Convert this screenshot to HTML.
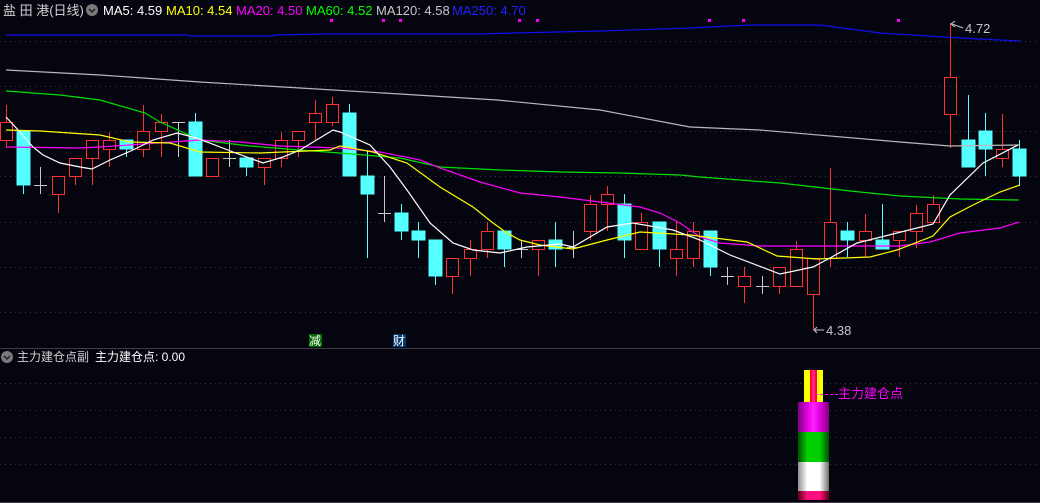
<!DOCTYPE html>
<html><head><meta charset="utf-8"><style>
html,body{margin:0;padding:0;background:#05050f;width:1040px;height:503px;overflow:hidden}
svg{display:block}
text{font-family:"Liberation Sans","Noto Sans CJK SC",sans-serif;font-size:13px}
text.s{font-size:12px}
.cr rect,.cr line{shape-rendering:crispEdges}
</style></head><body>
<svg width="1040" height="503" viewBox="0 0 1040 503" xmlns="http://www.w3.org/2000/svg">
<rect width="1040" height="503" fill="#05050f"/>
<g stroke="#3a3a44" stroke-dasharray="1,4" stroke-width="1">
<line x1="0" y1="41.5" x2="1040" y2="41.5"/><line x1="0" y1="86.5" x2="1040" y2="86.5"/>
<line x1="0" y1="131.5" x2="1040" y2="131.5"/><line x1="0" y1="176.5" x2="1040" y2="176.5"/>
<line x1="0" y1="222.5" x2="1040" y2="222.5"/><line x1="0" y1="267.5" x2="1040" y2="267.5"/>
<line x1="0" y1="312.5" x2="1040" y2="312.5"/>
<line x1="0" y1="383.5" x2="1040" y2="383.5"/><line x1="0" y1="410.5" x2="1040" y2="410.5"/>
<line x1="0" y1="437.5" x2="1040" y2="437.5"/><line x1="0" y1="464.5" x2="1040" y2="464.5"/>
</g>
<line x1="0" y1="348.5" x2="1040" y2="348.5" stroke="#3c3c44"/>
<line x1="0" y1="502.5" x2="1040" y2="502.5" stroke="#3c3c44"/>
<!-- header -->
<text x="3" y="15" fill="#d0d0d0">盐 田 港(日线)</text>
<circle cx="92" cy="10" r="6" fill="#7a7a7a"/><path d="M89 9 L92 12 L95 9" stroke="#202020" stroke-width="1.5" fill="none"/>
<text x="103" y="15" fill="#ffffff">MA5: 4.59</text>
<text x="166" y="15" fill="#ffff00">MA10: 4.54</text>
<text x="236" y="15" fill="#ff00ff">MA20: 4.50</text>
<text x="306" y="15" fill="#00ff00">MA60: 4.52</text>
<text x="376" y="15" fill="#c8c8c8">MA120: 4.58</text>
<text x="452" y="15" fill="#2222ff">MA250: 4.70</text>
<g fill="#ff00ff"><rect x="330" y="19" width="3" height="3"/><rect x="382" y="19" width="3" height="3"/><rect x="399" y="19" width="3" height="3"/><rect x="518" y="19" width="3" height="3"/><rect x="536" y="19" width="3" height="3"/><rect x="708" y="19" width="3" height="3"/><rect x="742" y="19" width="3" height="3"/><rect x="897" y="19" width="3" height="3"/></g>
<!-- red candles -->
<g class="cr" stroke="#ff3232" stroke-width="1" fill="none">
<line x1="6.5" y1="105" x2="6.5" y2="122"/><line x1="6.5" y1="141" x2="6.5" y2="148"/><rect x="0.5" y="122.5" width="12" height="18"/>
<line x1="58.5" y1="195" x2="58.5" y2="213"/><rect x="52.5" y="176.5" width="12" height="18"/>
<line x1="75.5" y1="177" x2="75.5" y2="185"/><rect x="69.5" y="158.5" width="12" height="18"/>
<line x1="92.5" y1="159" x2="92.5" y2="185"/><rect x="86.5" y="140.5" width="12" height="18"/>
<line x1="109.5" y1="132" x2="109.5" y2="140"/><line x1="109.5" y1="150" x2="109.5" y2="167"/><rect x="103.5" y="140.5" width="12" height="9"/>
<line x1="143.5" y1="105" x2="143.5" y2="131"/><line x1="143.5" y1="150" x2="143.5" y2="157"/><rect x="137.5" y="131.5" width="12" height="18"/>
<line x1="161.5" y1="114" x2="161.5" y2="122"/><line x1="161.5" y1="132" x2="161.5" y2="157"/><rect x="155.5" y="122.5" width="12" height="9"/>
<rect x="206.5" y="158.5" width="12" height="18"/>
<line x1="264.5" y1="168" x2="264.5" y2="185"/><rect x="258.5" y="158.5" width="12" height="9"/>
<line x1="281.5" y1="132" x2="281.5" y2="140"/><line x1="281.5" y1="159" x2="281.5" y2="167"/><rect x="275.5" y="140.5" width="12" height="18"/>
<line x1="298.5" y1="141" x2="298.5" y2="157"/><rect x="292.5" y="131.5" width="12" height="9"/>
<line x1="315.5" y1="100" x2="315.5" y2="113"/><line x1="315.5" y1="123" x2="315.5" y2="140"/><rect x="309.5" y="113.5" width="12" height="9"/>
<line x1="332.5" y1="97" x2="332.5" y2="104"/><line x1="332.5" y1="123" x2="332.5" y2="126"/><rect x="326.5" y="104.5" width="12" height="18"/>
<line x1="452.5" y1="277" x2="452.5" y2="294"/><rect x="446.5" y="258.5" width="12" height="18"/>
<line x1="470.5" y1="240" x2="470.5" y2="249"/><line x1="470.5" y1="259" x2="470.5" y2="276"/><rect x="464.5" y="249.5" width="12" height="9"/>
<line x1="487.5" y1="222" x2="487.5" y2="231"/><line x1="487.5" y1="250" x2="487.5" y2="258"/><rect x="481.5" y="231.5" width="12" height="18"/>
<line x1="538.5" y1="250" x2="538.5" y2="276"/><rect x="532.5" y="240.5" width="12" height="9"/>
<line x1="590.5" y1="195" x2="590.5" y2="204"/><line x1="590.5" y1="232" x2="590.5" y2="240"/><rect x="584.5" y="204.5" width="12" height="27"/>
<line x1="607.5" y1="186" x2="607.5" y2="194"/><line x1="607.5" y1="205" x2="607.5" y2="231"/><rect x="601.5" y="194.5" width="12" height="10"/>
<line x1="641.5" y1="213" x2="641.5" y2="222"/><rect x="635.5" y="222.5" width="12" height="27"/>
<line x1="676.5" y1="222" x2="676.5" y2="249"/><line x1="676.5" y1="259" x2="676.5" y2="276"/><rect x="670.5" y="249.5" width="12" height="9"/>
<line x1="693.5" y1="222" x2="693.5" y2="231"/><line x1="693.5" y1="259" x2="693.5" y2="267"/><rect x="687.5" y="231.5" width="12" height="27"/>
<line x1="744.5" y1="267" x2="744.5" y2="276"/><line x1="744.5" y1="287" x2="744.5" y2="303"/><rect x="738.5" y="276.5" width="12" height="10"/>
<line x1="779.5" y1="287" x2="779.5" y2="294"/><rect x="773.5" y="267.5" width="12" height="19"/>
<line x1="796.5" y1="241" x2="796.5" y2="249"/><rect x="790.5" y="249.5" width="12" height="37"/>
<line x1="813.5" y1="295" x2="813.5" y2="330"/><rect x="807.5" y="258.5" width="12" height="36"/>
<line x1="830.5" y1="168" x2="830.5" y2="222"/><line x1="830.5" y1="259" x2="830.5" y2="267"/><rect x="824.5" y="222.5" width="12" height="36"/>
<line x1="865.5" y1="214" x2="865.5" y2="231"/><line x1="865.5" y1="241" x2="865.5" y2="257"/><rect x="859.5" y="231.5" width="12" height="9"/>
<line x1="899.5" y1="241" x2="899.5" y2="257"/><rect x="893.5" y="231.5" width="12" height="9"/>
<line x1="916.5" y1="205" x2="916.5" y2="213"/><line x1="916.5" y1="232" x2="916.5" y2="248"/><rect x="910.5" y="213.5" width="12" height="18"/>
<line x1="933.5" y1="195" x2="933.5" y2="204"/><rect x="927.5" y="204.5" width="12" height="18"/>
<line x1="950.5" y1="23" x2="950.5" y2="77"/><line x1="950.5" y1="115" x2="950.5" y2="148"/><rect x="944.5" y="77.5" width="12" height="37"/>
<line x1="1002.5" y1="114" x2="1002.5" y2="149"/><line x1="1002.5" y1="159" x2="1002.5" y2="167"/><rect x="996.5" y="149.5" width="12" height="9"/>
</g>
<!-- cyan candles -->
<g class="cr" stroke="#54ffff" fill="#54ffff">
<line x1="23.5" y1="131" x2="23.5" y2="194"/><rect x="17" y="131" width="13" height="54"/>
<line x1="126.5" y1="140" x2="126.5" y2="157"/><rect x="120" y="140" width="13" height="9"/>
<line x1="195.5" y1="113" x2="195.5" y2="176"/><rect x="189" y="122" width="13" height="54"/>
<line x1="246.5" y1="158" x2="246.5" y2="176"/><rect x="240" y="158" width="13" height="9"/>
<line x1="349.5" y1="104" x2="349.5" y2="176"/><rect x="343" y="113" width="13" height="63"/>
<line x1="367.5" y1="150" x2="367.5" y2="258"/><rect x="361" y="176" width="13" height="18"/>
<line x1="401.5" y1="204" x2="401.5" y2="240"/><rect x="395" y="213" width="13" height="18"/>
<line x1="418.5" y1="222" x2="418.5" y2="258"/><rect x="412" y="231" width="13" height="9"/>
<line x1="435.5" y1="240" x2="435.5" y2="285"/><rect x="429" y="240" width="13" height="36"/>
<line x1="504.5" y1="231" x2="504.5" y2="267"/><rect x="498" y="231" width="13" height="18"/>
<line x1="555.5" y1="222" x2="555.5" y2="267"/><rect x="549" y="240" width="13" height="9"/>
<line x1="624.5" y1="194" x2="624.5" y2="258"/><rect x="618" y="204" width="13" height="36"/>
<line x1="659.5" y1="222" x2="659.5" y2="267"/><rect x="653" y="222" width="13" height="27"/>
<line x1="710.5" y1="231" x2="710.5" y2="276"/><rect x="704" y="231" width="13" height="36"/>
<line x1="847.5" y1="222" x2="847.5" y2="257"/><rect x="841" y="231" width="13" height="9"/>
<line x1="882.5" y1="204" x2="882.5" y2="249"/><rect x="876" y="240" width="13" height="9"/>
<line x1="968.5" y1="95" x2="968.5" y2="167"/><rect x="962" y="140" width="13" height="27"/>
<line x1="985.5" y1="113" x2="985.5" y2="176"/><rect x="979" y="131" width="13" height="18"/>
<line x1="1019.5" y1="140" x2="1019.5" y2="185"/><rect x="1013" y="149" width="13" height="27"/>
</g>
<!-- doji -->
<g class="cr" stroke="#c8c8c8">
<line x1="40.5" y1="167" x2="40.5" y2="194"/><line x1="34" y1="185.5" x2="47" y2="185.5"/>
<line x1="178.5" y1="122" x2="178.5" y2="157"/><line x1="172" y1="122.5" x2="185" y2="122.5"/>
<line x1="229.5" y1="140" x2="229.5" y2="167"/><line x1="223" y1="158.5" x2="236" y2="158.5"/>
<line x1="384.5" y1="176" x2="384.5" y2="222"/><line x1="378" y1="213.5" x2="391" y2="213.5"/>
<line x1="521.5" y1="240" x2="521.5" y2="258"/><line x1="515" y1="249.5" x2="528" y2="249.5"/>
<line x1="573.5" y1="231" x2="573.5" y2="258"/><line x1="567" y1="247.5" x2="580" y2="247.5"/>
<line x1="727.5" y1="267" x2="727.5" y2="285"/><line x1="721" y1="276.5" x2="734" y2="276.5"/>
<line x1="762.5" y1="276" x2="762.5" y2="294"/><line x1="756" y1="286.5" x2="769" y2="286.5"/>
</g>
<!-- MAs -->
<g fill="none" stroke-width="1.2">
<polyline stroke="#1010ee" points="6,35 187,35 190,36 273,36 275,35 323,34 480,34 513,33 600,31 690,28 750,25 820,25 880,33 960,38 1020,41"/>
<polyline stroke="#b8b8b8" points="6,70 100,75 200,82 300,88 400,94 497,100 600,110 690,127 760,130 900,142 950,146 1019,145"/>
<polyline stroke="#00e000" points="6,91 60,95 100,100 145,113 160,122 200,140 250,146 300,150 340,153 400,158 440,167 500,170 560,172 620,173 680,175 700,177 780,183 850,191 900,196 960,199 1019,200"/>
<polyline stroke="#ff00ff" points="6,147 80,148 100,147 200,140 240,142 280,146 340,148 380,152 420,160 440,168 480,182 520,193 560,197 600,202 640,207 660,213 680,223 700,237 720,243 760,246 900,246 930,242 960,233 1000,228 1019,222"/>
<polyline stroke="#ffff00" points="6,130 40,131 100,135 130,142 170,143 200,152 260,153 330,150 340,146 373,152 407,163 440,187 473,207 493,223 507,233 520,240 540,245 573,249 607,240 640,232 690,235 747,242 777,256 817,259 870,257 897,250 933,236 950,217 973,205 1000,192 1020,185"/>
<polyline stroke="#ffffff" points="6,117 20,132 33,147 43,155 60,163 80,167 92,169 110,160 133,150 153,140 177,133 193,137 207,142 233,152 263,163 283,157 300,150 333,130 340,132 370,145 390,167 407,190 430,223 453,243 473,250 500,253 527,247 560,244 573,247 607,227 633,223 673,230 700,240 730,255 780,274 813,267 830,258 857,243 897,233 933,224 950,195 983,163 1018,145"/>
</g>
<!-- hi/lo labels -->
<g stroke="#c8c8c8" fill="none"><path d="M952 24 L963 28"/><path d="M955 21 L951 24 L955 27"/><path d="M814 330 L824 330"/><path d="M817 327 L814 330 L817 333"/></g>
<text x="965" y="33" fill="#c8c8c8">4.72</text>
<text x="826" y="335" fill="#c8c8c8">4.38</text>
<rect x="309" y="334" width="13" height="13" fill="#006a00"/><text class="s" x="309" y="345" fill="#fff">减</text>
<rect x="393" y="334" width="13" height="13" fill="#00386e"/><text class="s" x="393" y="345" fill="#fff">财</text>
<!-- lower panel -->
<circle cx="7" cy="357" r="6" fill="#7a7a7a"/><path d="M4 356 L7 359 L10 356" stroke="#202020" stroke-width="1.5" fill="none"/>
<text class="s" x="17" y="361" fill="#d0d0d0">主力建仓点副</text>
<text class="s" x="95" y="361" fill="#ffffff">主力建仓点: 0.00</text>
<defs>
<linearGradient id="gm" x1="0" x2="1"><stop offset="0" stop-color="#800080"/><stop offset="0.3" stop-color="#e000e0"/><stop offset="0.5" stop-color="#ff20ff"/><stop offset="0.7" stop-color="#e000e0"/><stop offset="1" stop-color="#800080"/></linearGradient>
<linearGradient id="gg" x1="0" x2="1"><stop offset="0" stop-color="#005000"/><stop offset="0.3" stop-color="#00d000"/><stop offset="0.7" stop-color="#00d000"/><stop offset="1" stop-color="#005000"/></linearGradient>
<linearGradient id="gw" x1="0" x2="1"><stop offset="0" stop-color="#909090"/><stop offset="0.3" stop-color="#ffffff"/><stop offset="0.7" stop-color="#ffffff"/><stop offset="1" stop-color="#707070"/></linearGradient>
<linearGradient id="gr" x1="0" x2="1"><stop offset="0" stop-color="#600010"/><stop offset="0.3" stop-color="#ff1080"/><stop offset="0.7" stop-color="#ff1080"/><stop offset="1" stop-color="#600010"/></linearGradient>
</defs>
<rect x="804" y="370" width="19" height="32" fill="#ffff00"/>
<rect x="810" y="370" width="7" height="32" fill="#ff0040"/>
<rect x="812" y="370" width="3" height="32" fill="#ff2080"/>
<rect x="798" y="402" width="31" height="30" fill="url(#gm)"/>
<rect x="798" y="432" width="31" height="30" fill="url(#gg)"/>
<rect x="798" y="462" width="31" height="29" fill="url(#gw)"/>
<rect x="798" y="491" width="31" height="9" fill="url(#gr)"/>
<line x1="815" y1="394.5" x2="838" y2="394.5" stroke="#ff00ff" stroke-dasharray="3,2"/>
<text x="838" y="398" fill="#ff00ff">主力建仓点</text>
</svg>
</body></html>
